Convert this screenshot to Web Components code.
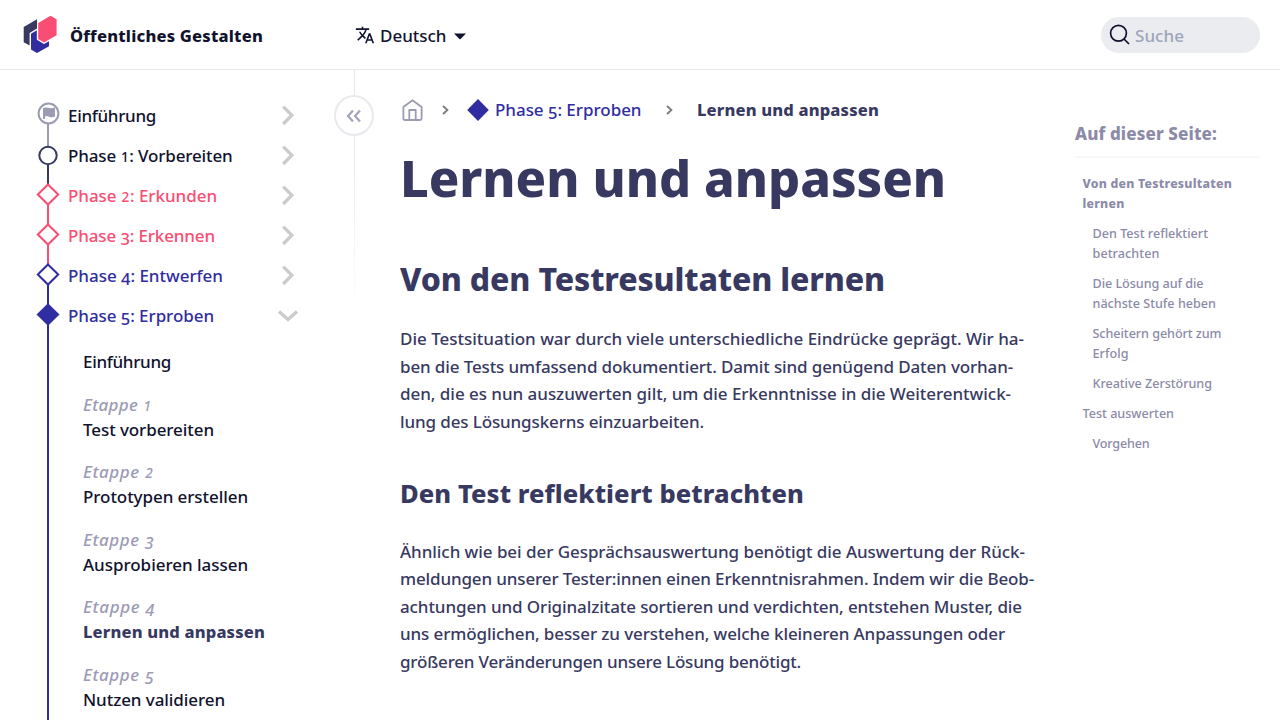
<!DOCTYPE html>
<html lang="de">
<head>
<meta charset="utf-8">
<title>Lernen und anpassen – Öffentliches Gestalten</title>
<style>
html,body{margin:0;height:100%;overflow:hidden;background:#fff}
body{font-family:"Noto Sans","Open Sans",sans-serif;font-size:17px;font-weight:500;color:#383961}
</style>
</head>
<body>
<og-app></og-app>
<script>
const define=(name,html,setup)=>{
  const t=document.createElement('template');
  t.innerHTML=html;
  customElements.define(name,class extends HTMLElement{
    connectedCallback(){
      if(this.shadowRoot)return;
      this.attachShadow({mode:'open'}).append(t.content.cloneNode(true));
      if(setup)setup(this,this.shadowRoot);
    }
  });
};

/* One line of text, tracked to the measure given in "w". Old-style figures via .lo / .sm. */
customElements.define('og-line',class extends HTMLElement{
  connectedCallback(){
    if(this.shadowRoot)return;
    const r=this.attachShadow({mode:'open'});
    const txt=this.textContent.trim();
    r.innerHTML='<style>:host{display:block;white-space:pre}span.t{display:inline-block;line-height:inherit}.sm{font-size:.8em;line-height:0;padding:0 .05em}.lo{vertical-align:-.16em;line-height:0;font-size:.97em}</style><span class="t"></span>';
    const s=r.querySelector('.t');
    s.innerHTML=txt.replace(/[12]/g,'<span class="sm">$&</span>').replace(/[345]/g,'<span class="lo">$&</span>');
    const w=parseFloat(this.getAttribute('w'));
    if(w){
      const n=s.getBoundingClientRect().width;
      s.style.letterSpacing=((w-n)/txt.length).toFixed(3)+'px';
    }
  }
});

define('og-logo',`<style>:host{display:block;width:34px;height:38px}svg{display:block}</style>
<svg width="34" height="38" viewBox="23 15 34 38"><path fill="#383961" d="M23.7 27 37 19.3V28.6L29.6 33V45.6L23.7 42.3Z"/><path fill="#302da0" d="M31 33.8 36.8 30.3V39.8L44 44 49 41.2V46.2L37 53 31 49.5Z"/><path fill="#fa4d73" d="M38.2 23 50.5 15.7 56.6 19.2V35.2L44 42.4 38.2 39Z"/></svg>`);

define('og-header',`<style>
:host{display:grid;grid-template-columns:355px 1fr auto;align-items:center;height:69px;border-bottom:1px solid #e9eaee;padding:0 20px 0 0;color:#10122e;box-sizing:content-box}
.brand{display:flex;align-items:center;gap:13px;padding-left:23px;font-weight:800;font-size:16.500px}
og-logo{margin-top:-2px}
.lang{display:flex;align-items:center}
.lang og-line{margin:0 7px 0 5px}
.search{width:159px;height:36px;border-radius:18px;background:#ebecf0;display:flex;align-items:center;gap:5px;color:#9ca5b9;box-sizing:border-box;padding-left:8px}
og-line{line-height:24px;margin-top:2px}
.lang og-line,.search og-line{margin-top:3px}
.caret{margin-top:3px}
svg{display:block}
</style>
<div class="brand"><og-logo></og-logo><og-line w="193">Öffentliches Gestalten</og-line></div>
<div class="lang"><svg width="20" height="20" viewBox="0 0 24 24" fill="#10122e"><path d="M12.87 15.07l-2.54-2.51.03-.03A17.52 17.52 0 0 0 14.07 6H17V4h-7V2H8v2H1v1.99h11.17C11.5 7.92 10.44 9.75 9 11.35 8.07 10.32 7.3 9.19 6.69 8h-2c.73 1.63 1.73 3.17 2.98 4.56l-5.09 5.02L4 19l5-5 3.11 3.11.76-2.04zM18.500 10h-2L12 22h2l1.120-3h4.750L21 22h2l-4.500-12zm-2.620 7l1.620-4.330L19.120 17h-3.240z"/></svg><og-line w="66.5">Deutsch</og-line><svg class="caret" width="12" height="7" viewBox="0 0 12 7"><path fill="#10122e" d="M0 .5H12L6 6.500Z"/></svg></div>
<div class="search"><svg width="21" height="21" viewBox="0 0 21 21" fill="none" stroke="#10122e" stroke-width="1.700"><circle cx="9.500" cy="9.300" r="7.900"/><path d="M15 15 20 20"/></svg><og-line w="49">Suche</og-line></div>`);

define('og-phase',`<style>
:host{display:grid;grid-template-columns:24px 1fr 22px;column-gap:8px;height:40px;align-items:center}
svg{display:block}
og-line{line-height:24px}
</style><div class="i"></div><og-line></og-line><div class="c"></div>`,(el,r)=>{
  const a=n=>el.getAttribute(n),c=a('color'),k=a('kind');
  const y=k==='circle'?19.500:k==='flag'?17.500:18.500;
  const shape={
    flag:`<circle cx="12.500" cy="${y}" r="9.900" fill="#fff" stroke="${c}" stroke-width="2"/><path fill="${c}" d="M7 12Q10 11 12.500 11.800T19 11.500V20.500Q16 22 13 20.700T9 20.800V23H7Z"/>`,
    circle:`<circle cx="12" cy="${y}" r="8.700" fill="#fff" stroke="${c}" stroke-width="2"/>`,
    open:`<path fill="#fff" stroke="${c}" stroke-width="2" d="M12 ${y-10}L22.200 ${y}L12 ${y+10}L1.800 ${y}Z"/>`,
    full:`<path fill="${c}" d="M12 ${y-11.300}L23.500 ${y}L12 ${y+11.300}L.500 ${y}Z"/>`}[k];
  r.querySelector('.i').innerHTML=`<svg width="24" height="40">${a('top')?`<path stroke="${a('top')}" stroke-width="2" d="M12 0V${y}"/>`:''}<path stroke="${c}" stroke-width="2" d="M12 ${y}V40"/>${shape}</svg>`;
  r.querySelector('.c').innerHTML=el.hasAttribute('open')
    ?`<svg width="22" height="22" fill="none" stroke="#ccc" stroke-width="3.400"><path d="M2 6.500 11 14.500 20 6.500"/></svg>`
    :`<svg width="22" height="22" fill="none" stroke="#ccc" stroke-width="3.400"><path d="M6.200 1.600 14.800 10.300 6.200 19"/></svg>`;
  const l=r.querySelector('og-line'),n=document.createElement('og-line');
  n.setAttribute('w',a('w'));n.textContent=el.textContent;n.style.color=a('text')||c;
  l.replaceWith(n);
});

define('og-step',`<style>
:host{display:block;height:67.500px;color:#10122e}
:host([active]) .n{color:#383961;font-weight:800;font-size:16.500px}
.s{font-style:italic;color:#9c9bb4}
og-line{line-height:25px}
</style><og-line class="s"></og-line><og-line class="n"></og-line>`,(el,r)=>{
  [['.s','stage','sw'],['.n','name','w']].forEach(([q,t,w])=>{
    const o=r.querySelector(q),n=document.createElement('og-line');
    n.className=o.className;n.setAttribute('w',el.getAttribute(w));n.textContent=el.getAttribute(t);o.replaceWith(n);
  });
});

define('og-sidebar',`<style>
:host{display:block;padding:26px 0 0 36px;width:318px;color:#10122e}
.phases{width:262.500px}
.steps{margin-left:11px;border-left:2px solid #302da0;padding:13px 0 0 34px;height:380px}
.first{line-height:26px;margin-bottom:16.700px;color:#10122e}
</style>
<div class="phases">
<og-phase kind="flag" color="#9c9bb4" text="#10122e" w="88">Einführung</og-phase>
<og-phase kind="circle" color="#383961" top="#9c9bb4" text="#10122e" w="164.5">Phase 1: Vorbereiten</og-phase>
<og-phase kind="open" color="#fa4d73" top="#383961" w="149">Phase 2: Erkunden</og-phase>
<og-phase kind="open" color="#fa4d73" top="#fa4d73" w="147">Phase 3: Erkennen</og-phase>
<og-phase kind="open" color="#302da0" top="#fa4d73" w="155">Phase 4: Entwerfen</og-phase>
<og-phase kind="full" color="#302da0" top="#302da0" open w="146">Phase 5: Erproben</og-phase>
</div>
<div class="steps">
<og-line class="first" w="88">Einführung</og-line>
<og-step stage="Etappe 1" sw="69" name="Test vorbereiten" w="131"></og-step>
<og-step stage="Etappe 2" sw="71" name="Prototypen erstellen" w="165"></og-step>
<og-step stage="Etappe 3" sw="71" name="Ausprobieren lassen" w="165"></og-step>
<og-step stage="Etappe 4" sw="72" name="Lernen und anpassen" w="182" active></og-step>
<og-step stage="Etappe 5" sw="71" name="Nutzen validieren" w="142"></og-step>
</div>`);

define('og-divider',`<style>
:host{display:block;position:relative;width:1px;height:250px;background:linear-gradient(#e6e7ec 0,#ededf1 40%,#fff)}
button{position:absolute;left:-20px;top:25px;width:40px;height:41px;border:2px solid #e9e9ee;border-radius:50%;background:#fff;padding:0;display:grid;place-items:center}
</style><button aria-label="Menü einklappen"><svg width="16" height="14" fill="none" stroke="#a3a3bd" stroke-width="2.200"><path d="M7 1.500 2 7 7 12.500M14 1.500 9 7 14 12.500"/></svg></button>`);

define('og-crumbs',`<style>
:host{display:flex;align-items:center;height:30px}
svg{display:block;flex:none}
og-line{line-height:24px}
.p{color:#302da0}.h{font-weight:800;font-size:16.500px}
</style>
<svg style="margin-left:2px" width="21" height="24" fill="none" stroke="#9c9bb4" stroke-width="1.800" stroke-linejoin="round"><path d="M1.400 9 10.500 2.200 19.600 9V20.500Q19.600 22 18.100 22H2.900Q1.400 22 1.400 20.500ZM7.300 22V12H13.700V22"/></svg>
<svg style="margin-left:19px" width="7" height="10" fill="none" stroke="#777" stroke-width="1.700"><path d="M1 1 5.500 5 1 9"/></svg>
<svg style="margin-left:17.500px" width="22" height="22"><path fill="#302da0" d="M11 0 21.800 11 11 22 .200 11Z"/></svg>
<og-line class="p" style="margin-left:6.500px" w="146.500">Phase 5: Erproben</og-line>
<svg style="margin-left:24.500px" width="7" height="10" fill="none" stroke="#777" stroke-width="1.700"><path d="M1 1 5.500 5 1 9"/></svg>
<og-line class="h" style="margin-left:24px" w="182">Lernen und anpassen</og-line>`);

define('og-article',`<style>
:host{display:block;padding:25px 0 0 45px;width:640px}
h1,h2,h3{margin:0;font-weight:800}
h1{font-size:50.500px;line-height:70px;margin-top:18px}
h2{font-size:32px;line-height:44px;margin-top:44px}
h3{font-size:25.500px;line-height:36px;margin-top:40px}
p{margin:0;line-height:27.500px}
.a{margin-top:24px}.b{margin-top:26.600px}
</style>
<og-crumbs></og-crumbs>
<h1><og-line w="546">Lernen und anpassen</og-line></h1>
<h2><og-line w="485">Von den Testresultaten lernen</og-line></h2>
<p class="a"><og-line w="624">Die Testsituation war durch viele unterschiedliche Eindrücke geprägt. Wir ha-</og-line>
<og-line w="613">ben die Tests umfassend dokumentiert. Damit sind genügend Daten vorhan-</og-line>
<og-line w="611">den, die es nun auszuwerten gilt, um die Erkenntnisse in die Weiterentwick-</og-line>
<og-line w="304">lung des Lösungskerns einzuarbeiten.</og-line></p>
<h3><og-line w="404">Den Test reflektiert betrachten</og-line></h3>
<p class="b"><og-line w="625">Ähnlich wie bei der Gesprächsauswertung benötigt die Auswertung der Rück-</og-line>
<og-line w="634">meldungen unserer Tester:innen einen Erkenntnisrahmen. Indem wir die Beob-</og-line>
<og-line w="622">achtungen und Originalzitate sortieren und verdichten, entstehen Muster, die</og-line>
<og-line w="605">uns ermöglichen, besser zu verstehen, welche kleineren Anpassungen oder</og-line>
<og-line w="401">größeren Veränderungen unsere Lösung benötigt.</og-line></p>`);

define('og-toc',`<style>
:host{display:block;padding-top:51px;width:185px;color:#8b8aa7;font-size:12.600px}
.t{font-size:17px;font-weight:800;line-height:26px;padding-bottom:9px;border-bottom:2px solid #f8f8fa}
nav{padding:16px 0 0 7.500px;display:grid;row-gap:10px}
og-line{line-height:20px}
.t og-line{line-height:26px}
.l2{padding-left:10px}
.b{font-weight:800;font-size:12.300px}
</style>
<div class="t"><og-line w="142">Auf dieser Seite:</og-line></div>
<nav>
<div class="b"><og-line w="149.500">Von den Testresultaten</og-line><og-line w="42">lernen</og-line></div>
<div class="l2"><og-line w="115.500">Den Test reflektiert</og-line><og-line w="67">betrachten</og-line></div>
<div class="l2"><og-line w="111">Die Lösung auf die</og-line><og-line w="123.500">nächste Stufe heben</og-line></div>
<div class="l2"><og-line w="129">Scheitern gehört zum</og-line><og-line w="36">Erfolg</og-line></div>
<div class="l2"><og-line w="119.500">Kreative Zerstörung</og-line></div>
<div><og-line w="91.500">Test auswerten</og-line></div>
<div class="l2"><og-line w="57">Vorgehen</og-line></div>
</nav>`);

define('og-app',`<style>
:host{display:grid;grid-template-rows:70px 650px;height:720px;width:1280px;overflow:hidden}
main{display:grid;grid-template-columns:354px 1px 720px 1fr;overflow:hidden}
</style><og-header></og-header><main><og-sidebar></og-sidebar><og-divider></og-divider><og-article></og-article><og-toc></og-toc></main>`);
</script>
</body>
</html>
